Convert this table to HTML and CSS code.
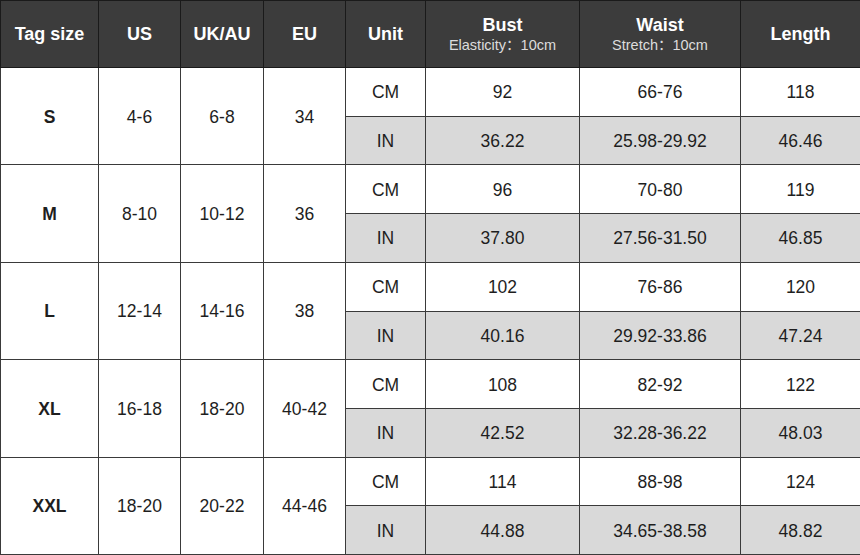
FILE: index.html
```html
<!DOCTYPE html>
<html>
<head>
<meta charset="utf-8">
<link rel="stylesheet" href="styles.css">
</head>
<body>
<div class="chart">
  <div class="cell head">Tag size</div>
  <div class="cell head">US</div>
  <div class="cell head">UK/AU</div>
  <div class="cell head">EU</div>
  <div class="cell head">Unit</div>
  <div class="cell head"><span class="title">Bust</span><span class="sub">Elasticity：10cm</span></div>
  <div class="cell head"><span class="title">Waist</span><span class="sub">Stretch：10cm</span></div>
  <div class="cell head">Length</div>

  <div class="cell span size">S</div>
  <div class="cell span">4-6</div>
  <div class="cell span">6-8</div>
  <div class="cell span">34</div>
  <div class="cell">CM</div><div class="cell">92</div><div class="cell">66-76</div><div class="cell">118</div>
  <div class="cell alt">IN</div><div class="cell alt">36.22</div><div class="cell alt">25.98-29.92</div><div class="cell alt">46.46</div>

  <div class="cell span size">M</div>
  <div class="cell span">8-10</div>
  <div class="cell span">10-12</div>
  <div class="cell span">36</div>
  <div class="cell">CM</div><div class="cell">96</div><div class="cell">70-80</div><div class="cell">119</div>
  <div class="cell alt">IN</div><div class="cell alt">37.80</div><div class="cell alt">27.56-31.50</div><div class="cell alt">46.85</div>

  <div class="cell span size">L</div>
  <div class="cell span">12-14</div>
  <div class="cell span">14-16</div>
  <div class="cell span">38</div>
  <div class="cell">CM</div><div class="cell">102</div><div class="cell">76-86</div><div class="cell">120</div>
  <div class="cell alt">IN</div><div class="cell alt">40.16</div><div class="cell alt">29.92-33.86</div><div class="cell alt">47.24</div>

  <div class="cell span size">XL</div>
  <div class="cell span">16-18</div>
  <div class="cell span">18-20</div>
  <div class="cell span">40-42</div>
  <div class="cell">CM</div><div class="cell">108</div><div class="cell">82-92</div><div class="cell">122</div>
  <div class="cell alt">IN</div><div class="cell alt">42.52</div><div class="cell alt">32.28-36.22</div><div class="cell alt">48.03</div>

  <div class="cell span size">XXL</div>
  <div class="cell span">18-20</div>
  <div class="cell span">20-22</div>
  <div class="cell span">44-46</div>
  <div class="cell">CM</div><div class="cell">114</div><div class="cell">88-98</div><div class="cell">124</div>
  <div class="cell alt">IN</div><div class="cell alt">44.88</div><div class="cell alt">34.65-38.58</div><div class="cell alt">48.82</div>
</div>
</body>
</html>
```

FILE: styles.css
```css
html, body {
  margin: 0;
  padding: 0;
  background: #ffffff;
}

.chart {
  box-sizing: border-box;
  width: 860px;
  height: 555px;
  padding: 1px 0 1px 1px;
  background: #3a3a3a;
  display: grid;
  grid-template-columns: 97px 81px 82px 81px 79px 153px 160px 1fr;
  grid-template-rows: 66px repeat(10, 1fr);
  gap: 1px;
  font-family: "Liberation Sans", Arial, sans-serif;
  font-size: 17.5px;
  color: #1e1e1e;
}

.cell {
  background: #ffffff;
  display: flex;
  flex-direction: column;
  align-items: center;
  justify-content: center;
  white-space: nowrap;
  padding-top: 2px;
}

.head {
  background: #3c3c3c;
  color: #ffffff;
  font-weight: bold;
  font-size: 18px;
  box-shadow: 0 0 0 1px #1a1a1a;
  padding-top: 1px;
}

.title {
  line-height: 21px;
}

.sub {
  font-family: "Liberation Sans", "Noto Sans CJK SC", Arial, sans-serif;
  font-weight: normal;
  font-size: 14.5px;
  line-height: 18px;
  color: #dcdcdc;
}

.span {
  grid-row: span 2;
}

.size {
  font-weight: bold;
}

.alt {
  background: #d9d9d9;
}
```
